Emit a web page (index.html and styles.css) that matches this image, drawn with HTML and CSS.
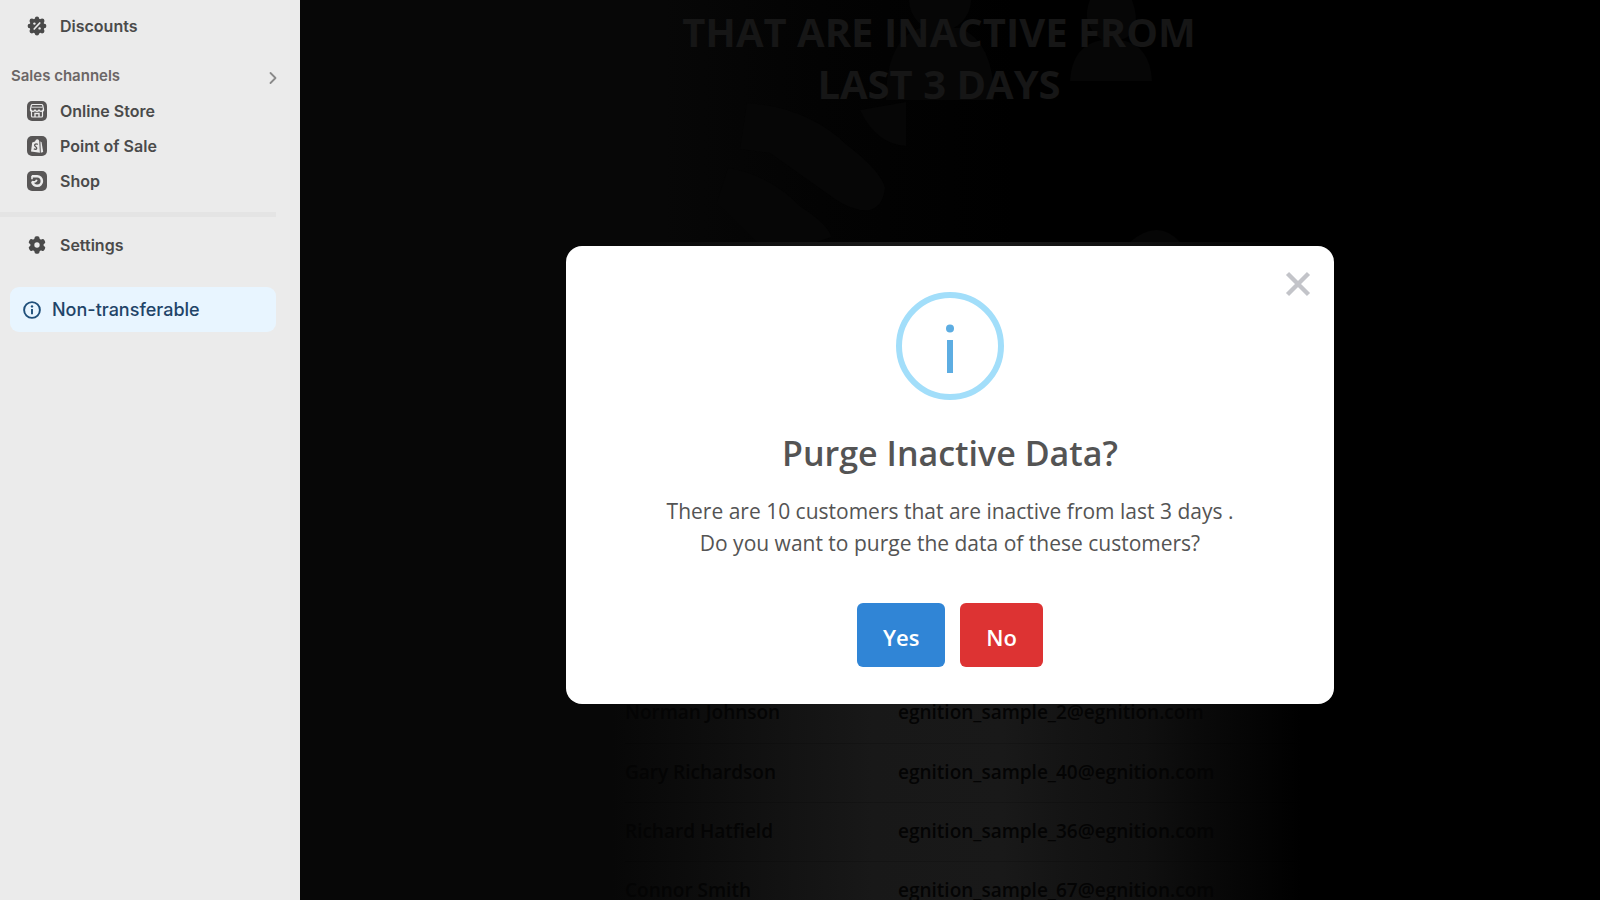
FILE: index.html
```html
<!DOCTYPE html>
<html lang="en">
<head>
<meta charset="utf-8">
<title>Purge Inactive Data</title>
<link rel="stylesheet" href="styles.css">
</head>
<body>
<aside class="sidebar">
  <nav class="nav">
    <a class="nav-item" href="#">
      <svg class="icon" viewBox="0 0 20 20"><g fill="#4a4a4a"><circle cx="10" cy="10" r="7.500"/><circle cx="10" cy="2.800" r="2.200"/><circle cx="10" cy="17.200" r="2.200"/><circle cx="2.800" cy="10" r="2.200"/><circle cx="17.200" cy="10" r="2.200"/><circle cx="4.900" cy="4.900" r="2.400"/><circle cx="15.100" cy="4.900" r="2.400"/><circle cx="4.900" cy="15.100" r="2.400"/><circle cx="15.100" cy="15.100" r="2.400"/></g><path d="M7.200 13l5.600-6" stroke="#ebebeb" stroke-width="1.700" stroke-linecap="round"/><circle cx="7.400" cy="7.600" r="1.200" fill="#ebebeb"/><circle cx="12.600" cy="12.400" r="1.200" fill="#ebebeb"/></svg>
      <span>Discounts</span>
    </a>
    <a class="nav-heading" href="#">
      <span>Sales channels</span>
      <svg class="chevron" viewBox="0 0 12 14"><path d="M3.500 2l5 5-5 5" fill="none" stroke="#8a8a8a" stroke-width="1.800" stroke-linecap="round" stroke-linejoin="round"/></svg>
    </a>
    <a class="nav-item" href="#">
      <svg class="icon" viewBox="0 0 20 20"><rect width="20" height="20" rx="5" fill="#585656"/><path d="M5.500 3.500h9q1 0 1.200 1l.8 3.500v1.500l-1 1v4.500q0 1-1 1h-9q-1 0-1-1v-4.500l-1-1V8l.8-3.500q.2-1 1.200-1z" fill="none" stroke="#ebebeb" stroke-width="1.200"/><path d="M4.500 6.200h11" stroke="#ebebeb" stroke-width=".9"/><path d="M4 8.600a2 1.800 0 0 0 4 0a2 1.800 0 0 0 4 0a2 1.800 0 0 0 4 0" fill="none" stroke="#ebebeb" stroke-width="1.300"/><path d="M8 16v-3.500h4V16" fill="none" stroke="#ebebeb" stroke-width="1.400"/></svg>
      <span>Online Store</span>
    </a>
    <a class="nav-item" href="#">
      <svg class="icon" viewBox="0 0 20 20"><rect width="20" height="20" rx="5" fill="#585656"/><path d="M5.200 6.500L8 5.500Q8.700 3.200 10.300 3.200T12.200 5l.7 11.800L4 15.400z" fill="#ebebeb"/><path d="M13.400 5.300l1.200 1.200 1.600 9.500-2.400.8z" fill="#ebebeb"/><path d="M10.800 8.300Q7.800 7.300 7.600 9.200C7.600 10.800 9.900 10.600 9.700 12.300Q9.400 13.900 6.800 12.900" fill="none" stroke="#585656" stroke-width="1.300"/></svg>
      <span>Point of Sale</span>
    </a>
    <a class="nav-item" href="#">
      <svg class="icon" viewBox="0 0 20 20"><rect width="20" height="20" rx="5" fill="#585656"/><path d="M4.800 5.200h5.400a4.800 4.800 0 1 1-4.900 5.300" fill="none" stroke="#ebebeb" stroke-width="2.600"/><path d="M5 5v3.200" fill="none" stroke="#ebebeb" stroke-width="1.600"/><path d="M5 10.600q4 1.200 4.800-1.800" fill="none" stroke="#ebebeb" stroke-width="1.800"/></svg>
      <span>Shop</span>
    </a>
    <hr class="divider">
    <a class="nav-item" href="#">
      <svg class="icon" viewBox="0 0 20 20"><g fill="#4a4a4a"><circle cx="10" cy="10" r="6.700"/><rect x="7.500" y="1.200" width="5" height="17.600" rx="1.800"/><rect x="7.500" y="1.200" width="5" height="17.600" rx="1.800" transform="rotate(60 10 10)"/><rect x="7.500" y="1.200" width="5" height="17.600" rx="1.800" transform="rotate(120 10 10)"/></g><circle cx="10" cy="10" r="2.700" fill="#ebebeb"/></svg>
      <span>Settings</span>
    </a>
  </nav>
  <a class="notice" href="#">
    <svg class="notice-icon" viewBox="0 0 18 18"><circle cx="9" cy="9" r="7.900" fill="none" stroke="#1f4f7a" stroke-width="1.900"/><path d="M9 8v5.200" stroke="#1f4f7a" stroke-width="1.900"/><circle cx="9" cy="5.400" r="1.200" fill="#1f4f7a"/></svg>
    <span>Non-transferable</span>
  </a>
</aside>
<main class="content">
  <section class="hero">
    <svg class="hero-art" viewBox="0 0 1300 242" preserveAspectRatio="xMidYMin slice" aria-hidden="true">
      <g fill="#060606">
        <circle cx="640" cy="0" r="31"/>
        <path d="M586 100q0-60 34-72h40q34 14 34 72z"/>
        <path d="M790 0h42q12 34-12 40 30 4 32 41h-82q2-36 32-41-22-16-12-40z"/>
        <path d="M560 110q16 34 46 36v-44z"/>
        <path d="M447 103q60 4 100 42 34 26 38 43-2 18-15 22-16 2-35-11l-65-46-30-4z"/>
        <path d="M428 168q40 6 73 39 28 18 30 30l-14 5h-60l-40-40z"/>
        <path d="M830 242q28-24 50 0z"/>
      </g>
    </svg>
    <h1 class="hero-title">THAT ARE INACTIVE FROM<br>LAST 3 DAYS</h1>
  </section>
  <section class="records">
    <table class="customers">
      <tbody>
        <tr><td>Norman Johnson</td><td>egnition_sample_2@egnition.com</td></tr>
        <tr><td>Gary Richardson</td><td>egnition_sample_40@egnition.com</td></tr>
        <tr><td>Richard Hatfield</td><td>egnition_sample_36@egnition.com</td></tr>
        <tr><td>Connor Smith</td><td>egnition_sample_67@egnition.com</td></tr>
      </tbody>
    </table>
  </section>
  <div class="overlay">
    <div class="modal" role="dialog" aria-modal="true" aria-labelledby="modal-title">
      <button class="close" type="button" aria-label="Close">
        <svg viewBox="0 0 24 24"><path d="M1.500 1.500l21 21M22.500 1.500l-21 21" stroke="#c3c4c9" stroke-width="4.400"/></svg>
      </button>
      <svg class="info" viewBox="0 0 108 108" aria-hidden="true"><circle cx="54" cy="54" r="51" fill="none" stroke="#a2defa" stroke-width="6"/><circle cx="54" cy="36.500" r="4" fill="#5dade2"/><path d="M54 48v33" stroke="#5dade2" stroke-width="6"/></svg>
      <h2 class="modal-title" id="modal-title">Purge Inactive Data?</h2>
      <p class="modal-text">There are 10 customers that are inactive from last 3 days .<br>Do you want to purge the data of these customers?</p>
      <div class="actions">
        <button class="btn btn-yes" type="button">Yes</button>
        <button class="btn btn-no" type="button">No</button>
      </div>
    </div>
  </div>
</main>
</body>
</html>
```
FILE: styles.css
```css
* { box-sizing: border-box; }

body {
  margin: 0;
  min-height: 100vh;
  display: flex;
  background: #000;
  font-family: "Open Sans", "Noto Sans", sans-serif;
}

a { color: inherit; text-decoration: none; }

.sidebar {
  flex: 0 0 300px;
  padding: 8px 24px 0 0;
  background: #ebebeb;
  font-family: Inter, sans-serif;
  color: #4a4a4a;
}

.nav { display: flex; flex-direction: column; }

.nav-item {
  display: flex;
  align-items: center;
  gap: 13px;
  height: 35px;
  padding-left: 27px;
  font-size: 16px;
  font-weight: 600;
}

.icon { width: 20px; height: 20px; }

.nav-heading {
  display: flex;
  align-items: center;
  justify-content: space-between;
  height: 34px;
  margin: 15px 0 1px;
  padding-left: 11px;
  font-size: 15px;
  font-weight: 600;
  color: #6b6666;
}

.chevron { width: 12px; height: 14px; margin: 6px -3px 0 0; }

.divider {
  width: 100%;
  height: 5px;
  margin: 14px 0 10px;
  border: 0;
  background: #e4e4e4;
}

.notice {
  display: flex;
  align-items: center;
  gap: 11px;
  height: 45px;
  margin: 25px 0 0 10px;
  padding-left: 13px;
  border-radius: 9px;
  background: #e8f5ff;
  color: #1f4468;
  font-size: 18px;
  font-weight: 500;
}

.notice-icon { width: 18px; height: 18px; }

.content {
  position: relative;
  flex: 1;
  display: flex;
  flex-direction: column;
  height: 100vh;
  overflow: hidden;
  background: #000;
}

.hero {
  position: relative;
  flex: 0 0 242px;
  overflow: hidden;
  background: linear-gradient(90deg, #070707 28%, #030303 40%, #000 55%);
}

.hero-art { position: absolute; inset: 0; width: 100%; height: 100%; }

.hero-title {
  position: relative;
  margin: 6px 22px 0 0;
  text-align: center;
  font-size: 40px;
  line-height: 52px;
  font-weight: 700;
  color: #161616;
}

.records {
  flex: 1;
  padding-top: 442px;
  background: linear-gradient(90deg, #070707 24%, #0d0d0d 31%, #131313 38%, #181818 44%, #191919 54%, #141414 59%, #101010 65%, #0a0a0a 69%, #000 77%);
}

.customers {
  width: 52%;
  margin-left: 25%;
  border-collapse: collapse;
  table-layout: fixed;
  font-size: 19px;
  line-height: 24px;
  font-weight: 600;
  color: #040404;
}

.customers td {
  height: 59px;
  padding: 0 0 2px;
  border-bottom: 1px solid rgba(0, 0, 0, 0.15);
  white-space: nowrap;
}

.customers td:first-child { width: 273px; }

.overlay {
  position: absolute;
  inset: 50px 0 0;
  display: flex;
  align-items: center;
  justify-content: center;
}

.modal {
  position: relative;
  display: flex;
  flex-direction: column;
  align-items: center;
  width: 768px;
  max-width: 90%;
  padding: 46px 24px 37px;
  border-radius: 16px;
  background: #fff;
  color: #545454;
}

.close {
  position: absolute;
  top: 26px;
  right: 24px;
  width: 24px;
  height: 24px;
  padding: 0;
  border: 0;
  background: none;
}

.close svg { display: block; overflow: visible; }

.info { width: 108px; height: 108px; }

.modal-title {
  margin: 28px 0 0;
  font-size: 34px;
  line-height: 50px;
  font-weight: 600;
}

.modal-text {
  margin: 17px 0 0;
  text-align: center;
  font-size: 21px;
  line-height: 32px;
}

.actions {
  display: flex;
  gap: 15px;
  margin-top: 44px;
}

.btn {
  height: 64px;
  padding: 4px 26px 0;
  border: 0;
  border-radius: 6px;
  color: #fff;
  font-family: inherit;
  font-size: 22px;
  font-weight: 600;
}

.btn-yes { background: #3085d6; }
.btn-no { background: #dd3333; }
```
